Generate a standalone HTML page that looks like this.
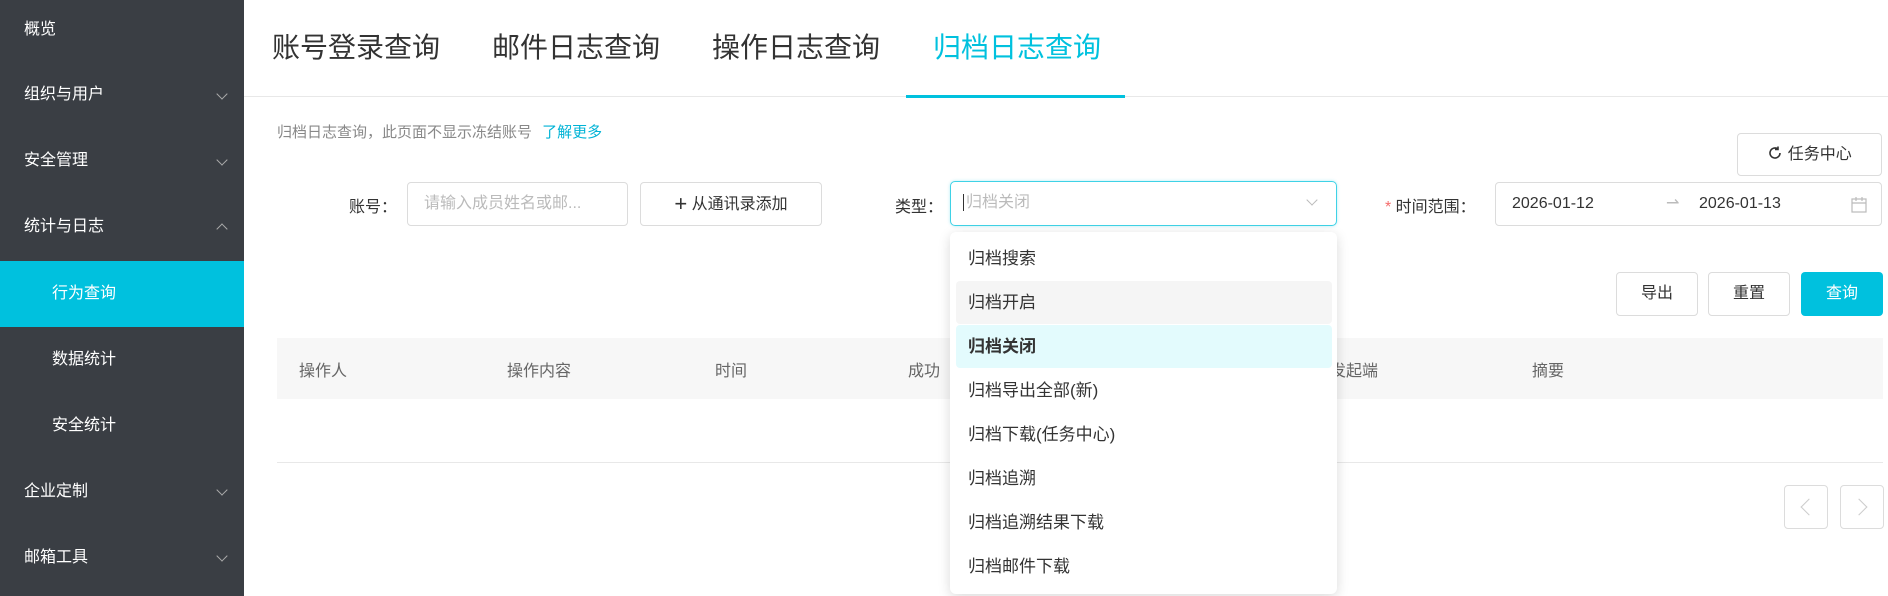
<!DOCTYPE html>
<html><head><meta charset="utf-8"><style>
*{box-sizing:border-box;margin:0;padding:0}
body{width:1888px;height:596px;overflow:hidden;background:#fff;font-family:"Liberation Sans","Noto Sans CJK SC",sans-serif;color:#333;position:relative}
.abs{position:absolute}
.side{left:0;top:0;width:244px;height:596px;background:#3a3e44}
.si{position:absolute;left:24px;color:#fff;font-size:16px;line-height:20px}
.sub{left:52px}
.chev{position:absolute;left:218px;width:8px;height:8px;border-right:1.5px solid #aaa;border-bottom:1.5px solid #aaa;transform:rotate(45deg)}
.up{transform:rotate(-135deg)}
.tab{top:30px;font-size:28px;line-height:36px;color:#333}
.box{border:1px solid #dcdcdc;border-radius:4px;background:#fff}
.t16{font-size:16px}
.dd{left:950px;top:232px;width:387px;height:362px;background:#fff;border-radius:6px;box-shadow:0 3px 12px rgba(0,0,0,.15)}
.it{position:absolute;left:6px;width:376px;height:43px;border-radius:4px;font-size:17px;line-height:43px;padding-left:12px;color:#333}
.th{top:362px;font-size:16px;color:#666;line-height:20px}
</style></head><body>
<div class="abs side"></div>
<div class="si" style="top:20px">概览</div>
<div class="si" style="top:85px">组织与用户</div><div class="chev" style="top:90px"></div>
<div class="si" style="top:151px">安全管理</div><div class="chev" style="top:156px"></div>
<div class="si" style="top:217px">统计与日志</div><div class="chev up" style="top:225px"></div>
<div class="abs" style="left:0;top:261px;width:244px;height:66px;background:#00c1de"></div>
<div class="si sub" style="top:284px">行为查询</div>
<div class="si sub" style="top:350px">数据统计</div>
<div class="si sub" style="top:416px">安全统计</div>
<div class="si" style="top:482px">企业定制</div><div class="chev" style="top:486px"></div>
<div class="si" style="top:548px">邮箱工具</div><div class="chev" style="top:552px"></div>

<div class="abs tab" style="left:272px">账号登录查询</div>
<div class="abs tab" style="left:492px">邮件日志查询</div>
<div class="abs tab" style="left:712px">操作日志查询</div>
<div class="abs tab" style="left:933px;color:#00c1de">归档日志查询</div>
<div class="abs" style="left:244px;top:96px;width:1644px;height:1px;background:#e8e8e8"></div>
<div class="abs" style="left:906px;top:95px;width:219px;height:3px;background:#00c1de"></div>

<div class="abs" style="left:277px;top:121px;font-size:15px;color:#888">归档日志查询，此页面不显示冻结账号 <span style="color:#00b3d6;margin-left:6px">了解更多</span></div>

<div class="abs box t16" style="left:1737px;top:133px;width:145px;height:43px;line-height:41px;text-align:center;color:#333">
<svg width="16" height="16" viewBox="0 0 16 16" style="vertical-align:-2px"><path d="M13 8a5 5 0 1 1-2-4M11 1.5v3h-3" fill="none" stroke="#333" stroke-width="1.6"/></svg> 任务中心</div>

<div class="abs t16" style="left:349px;top:193px">账号：</div>
<div class="abs box t16" style="left:407px;top:182px;width:221px;height:44px;line-height:42px;padding-left:16px;color:#bbb">请输入成员姓名或邮...</div>
<div class="abs box t16" style="left:640px;top:182px;width:182px;height:44px;line-height:42px;text-align:center;color:#333"><span style="font-size:22px;vertical-align:-2px">+</span> 从通讯录添加</div>

<div class="abs t16" style="left:895px;top:193px">类型：</div>
<div class="abs t16" style="left:950px;top:181px;width:387px;height:45px;border:1.5px solid #3fd2e6;border-radius:5px;line-height:42px;padding-left:12px;color:#bbb;box-shadow:0 0 3px rgba(0,193,222,.3)"><span style="border-left:1px solid #333;padding-left:2px">归档关闭</span>
<div class="abs" style="right:20px;top:14px;width:8px;height:8px;border-right:1.3px solid #bbb;border-bottom:1.3px solid #bbb;transform:rotate(45deg)"></div></div>

<div class="abs t16" style="left:1385px;top:193px"><span style="color:#f56c6c">*</span> 时间范围：</div>
<div class="abs box t16" style="left:1495px;top:182px;width:387px;height:44px;line-height:42px;color:#333">
<span class="abs" style="left:16px">2026-01-12</span><span class="abs" style="left:170px;color:#bbb">⇀</span><span class="abs" style="left:203px">2026-01-13</span>
<svg class="abs" style="left:355px;top:13px" width="16" height="17" viewBox="0 0 16 17"><rect x="1" y="3" width="14" height="13" fill="none" stroke="#bbb" stroke-width="1.2"/><path d="M1 7h14M5 1v4M11 1v4" stroke="#bbb" stroke-width="1.2"/></svg></div>

<div class="abs box t16" style="left:1616px;top:272px;width:82px;height:44px;line-height:42px;text-align:center">导出</div>
<div class="abs box t16" style="left:1708px;top:272px;width:82px;height:44px;line-height:42px;text-align:center">重置</div>
<div class="abs t16" style="left:1801px;top:272px;width:82px;height:44px;line-height:44px;text-align:center;background:#00c1de;color:#fff;border-radius:4px">查询</div>

<div class="abs" style="left:277px;top:338px;width:1606px;height:61px;background:#f7f7f7"></div>
<div class="abs th" style="left:299px">操作人</div>
<div class="abs th" style="left:507px">操作内容</div>
<div class="abs th" style="left:715px">时间</div>
<div class="abs th" style="left:908px">成功</div>
<div class="abs th" style="left:1330px">发起端</div>
<div class="abs th" style="left:1532px">摘要</div>
<div class="abs" style="left:277px;top:462px;width:1606px;height:1px;background:#e8e8e8"></div>

<div class="abs box" style="left:1784px;top:485px;width:44px;height:44px"><div class="abs" style="left:18px;top:15px;width:12px;height:12px;border-left:1.5px solid #ccc;border-bottom:1.5px solid #ccc;transform:rotate(45deg)"></div></div>
<div class="abs box" style="left:1840px;top:485px;width:44px;height:44px"><div class="abs" style="left:12px;top:15px;width:12px;height:12px;border-right:1.5px solid #ccc;border-top:1.5px solid #ccc;transform:rotate(45deg)"></div></div>

<div class="abs dd">
<div class="it" style="top:5px">归档搜索</div>
<div class="it" style="top:49px;background:#f5f5f5">归档开启</div>
<div class="it" style="top:93px;background:#e3fbfd;font-weight:bold">归档关闭</div>
<div class="it" style="top:137px">归档导出全部(新)</div>
<div class="it" style="top:181px">归档下载(任务中心)</div>
<div class="it" style="top:225px">归档追溯</div>
<div class="it" style="top:269px">归档追溯结果下载</div>
<div class="it" style="top:313px">归档邮件下载</div>
</div>
</body></html>
